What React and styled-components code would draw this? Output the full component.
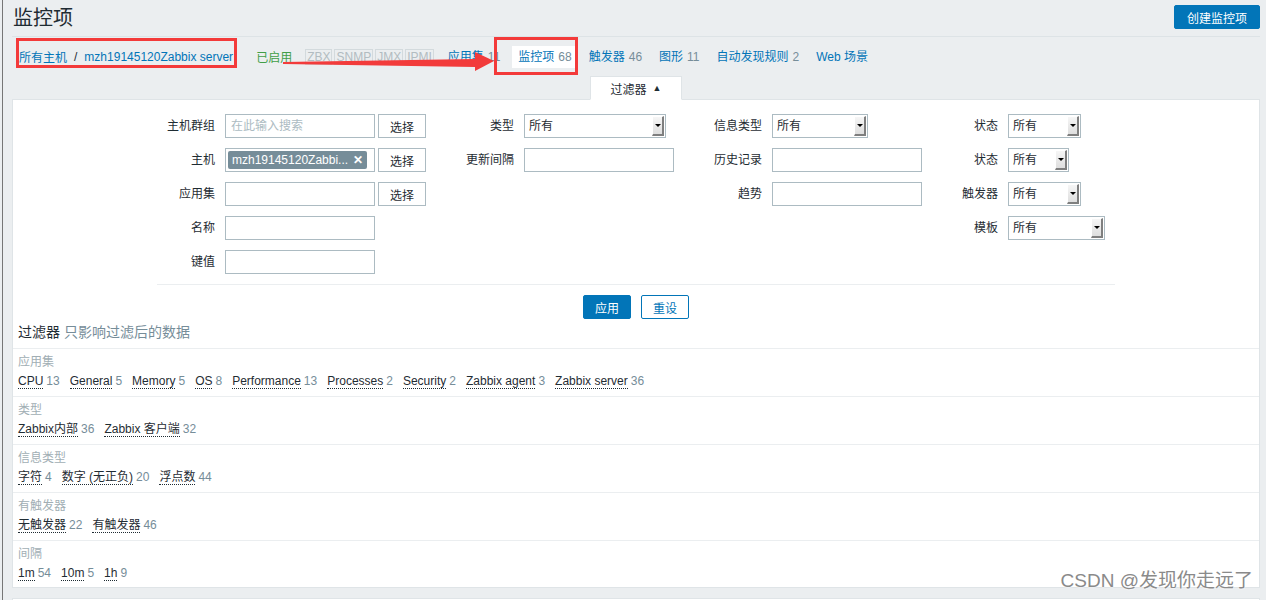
import React from 'react';
import styled, { createGlobalStyle } from 'styled-components';

const GlobalStyle = createGlobalStyle`
  html, body { margin: 0; padding: 0; overflow: hidden; }
  body {
    background: #ebeef0;
    font-family: "Liberation Sans", "Noto Sans CJK SC", Arial, sans-serif;
    font-size: 12px;
    color: #1f2c33;
  }
`;

// data for the summary block under the filter
const sections = [
  { title: '应用集', items: [['CPU', 13], ['General', 5], ['Memory', 5], ['OS', 8], ['Performance', 13], ['Processes', 2], ['Security', 2], ['Zabbix agent', 3], ['Zabbix server', 36]] },
  { title: '类型', items: [['Zabbix内部', 36], ['Zabbix 客户端', 32]] },
  { title: '信息类型', items: [['字符', 4], ['数字 (无正负)', 20], ['浮点数', 44]] },
  { title: '有触发器', items: [['无触发器', 22], ['有触发器', 46]] },
  { title: '间隔', items: [['1m', 54], ['10m', 5], ['1h', 9]] },
];

const navLinks = [
  ['应用集', 11],
  ['监控项', 68, true],
  ['触发器', 46],
  ['图形', 11],
  ['自动发现规则', 2],
  ['Web 场景'],
];

const Root = styled.div`
  position: relative;
  height: 600px;
`;

const Page = styled.div`
  margin-left: 2px;
  border-left: 1px solid #767676;
  padding: 0 6px 0 9px;
  height: 600px;
  box-sizing: border-box;
`;

const Header = styled.div`
  height: 36px;
  display: flex;
  align-items: center;
  justify-content: space-between;
  border-bottom: 1px solid #dde3e6;
`;

const Title = styled.h1`
  margin: 0 0 0 1px;
  font-size: 20px;
  font-weight: normal;
  color: #1f2c33;
  line-height: 24px;
`;

const PrimaryButton = styled.button`
  height: 24px;
  padding: 0 12px;
  border: 1px solid #0275b8;
  border-radius: 2px;
  background: #0275b8;
  color: #fff;
  font: inherit;
  margin-top: ${p => (p.$width ? 0 : -2)}px;
  ${p => p.$width && `width: ${p.$width}px; padding: 0;`}
`;

const Nav = styled.div`
  height: 39px;
  display: flex;
  align-items: center;
  gap: 18px;
  padding-left: 7px;
`;

const Crumbs = styled.div`
  display: flex;
  align-items: center;
`;

const Link = styled.span`
  color: #0275b8;
`;

const Slash = styled.span`
  margin: 0 7px;
  color: #1f2c33;
`;

const Enabled = styled.span`
  color: #429e47;
  margin-left: 5px;
`;

const BadgeGroup = styled.div`
  display: flex;
  gap: 2px;
  margin: 0 -4px 0 -5px;
`;

const Badge = styled.span`
  border: 1px solid #d3dadd;
  padding: 0 1px;
  line-height: 14px;
  color: #b2bcc1;
`;

const NavItem = styled.span`
  color: #0275b8;
  line-height: 14px;
  margin-left: ${p => p.$shift || 0}px;
  ${p => p.$active && `
    background: #fff;
    padding: 4px 6px;
    margin: 0 -6px;
  `}
`;

const Count = styled.span`
  color: #768d99;
  margin-left: ${p => p.$gap ?? 4}px;
`;

const TabRow = styled.div`
  display: flex;
  justify-content: center;
  margin-bottom: -1px;
  position: relative;
  z-index: 1;
`;

const FilterTab = styled.div`
  width: 92px;
  height: 24px;
  box-sizing: border-box;
  background: #fff;
  border: 1px solid #dfe4e7;
  border-bottom-color: #fff;
  display: flex;
  align-items: center;
  justify-content: center;
  gap: 6px;
  font-size: 12px;
`;

const Caret = styled.span`
  font-size: 9px;
`;

const Panel = styled.div`
  background: #fff;
  border: 1px solid #dfe4e7;
  margin-bottom: 10px;
  ${p => p.$stub && 'height: 40px;'}
`;

const FilterForm = styled.div`
  width: 958px;
  margin: 0 auto;
  padding-top: 14px;
  display: flex;
  gap: 10px;
`;

const FormColumn = styled.div`
  display: grid;
  grid-template-columns: ${p => p.$label}px ${p => p.$field}px;
  column-gap: 10px;
  row-gap: 10px;
  align-content: start;
`;

const Label = styled.label`
  text-align: right;
  line-height: 24px;
  white-space: nowrap;
`;

const Field = styled.div`
  display: flex;
  gap: 3px;
`;

const TextInput = styled.input`
  width: ${p => p.$w || 150}px;
  height: 24px;
  box-sizing: border-box;
  border: 1px solid #acbbc2;
  padding: 0 5px;
  font: inherit;
  color: #1f2c33;
  &::placeholder { color: #acbbc2; }
`;

const MultiSelect = styled.div`
  width: 150px;
  height: 24px;
  box-sizing: border-box;
  border: 1px solid #acbbc2;
  padding: 2px;
`;

const Chip = styled.span`
  display: inline-flex;
  align-items: center;
  gap: 5px;
  height: 18px;
  padding: 0 4px;
  border-radius: 2px;
  background: #768d99;
  color: #fff;
`;

const ChipX = styled.span`
  font-weight: bold;
  font-size: 12px;
`;

const SelectButton = styled.button`
  width: 48px;
  height: 24px;
  border: 1px solid #acbbc2;
  background: #fff;
  color: #1f2c33;
  font: inherit;
  padding: 0;
`;

const Select = styled.div`
  width: ${p => p.$w}px;
  height: 24px;
  box-sizing: border-box;
  border: 1px solid #acbbc2;
  display: flex;
  align-items: stretch;
  padding: 1px;
`;

const SelectText = styled.span`
  flex: 1;
  line-height: 20px;
  padding-left: 3px;
`;

const SelectArrow = styled.span`
  width: 12px;
  box-sizing: border-box;
  background: linear-gradient(#f6f6f6, #dedede);
  border-left: 1px solid #fff;
  border-top: 1px solid #fff;
  border-right: 2px solid #7f7f7f;
  border-bottom: 2px solid #7f7f7f;
  display: flex;
  align-items: center;
  justify-content: center;
  &::after {
    content: '';
    border-left: 3px solid transparent;
    border-right: 3px solid transparent;
    border-top: 3px solid #000;
  }
`;

const FormDivider = styled.div`
  width: 958px;
  margin: 10px auto 0;
  border-top: 1px solid #ebeef0;
`;

const ButtonRow = styled.div`
  display: flex;
  justify-content: center;
  gap: 10px;
  margin-top: 10px;
`;

const OutlineButton = styled.button`
  width: 48px;
  height: 24px;
  padding: 0;
  border: 1px solid #0275b8;
  border-radius: 2px;
  background: #fff;
  color: #0275b8;
  font: inherit;
`;

const SummaryTitle = styled.div`
  font-size: 14px;
  line-height: 16px;
  padding: 5px 5px 8px;
`;

const Hint = styled.span`
  color: #768d99;
`;

const Section = styled.div`
  border-top: 1px solid #ebeef0;
  padding: 6px 5px 7px;
  &:last-child { padding-bottom: 6px; }
`;

const SectionTitle = styled.div`
  color: #a1aeb4;
  line-height: 14px;
`;

const Tags = styled.div`
  margin-top: 4px;
  display: flex;
  gap: 10px;
  line-height: 16px;
`;

const Tag = styled.span`
  white-space: nowrap;
`;

const TagName = styled.span`
  border-bottom: 1px dotted #1f2c33;
`;

const RedBox = styled.div`
  position: absolute;
  left: ${p => p.$x}px;
  top: ${p => p.$y}px;
  width: ${p => p.$w}px;
  height: ${p => p.$h}px;
  box-sizing: border-box;
  border: 3px solid #f33a3a;
  pointer-events: none;
`;

const ArrowSvg = styled.svg`
  position: absolute;
  left: 0;
  top: 0;
  pointer-events: none;
`;

const Watermark = styled.div`
  position: absolute;
  right: 13px;
  bottom: 8px;
  font-size: 19px;
  color: #8a8a8a;
  text-shadow: 0 0 2px #fff, 0 0 2px #fff;
  font-family: "Liberation Sans", "Noto Sans CJK SC", sans-serif;
`;

const Dropdown = ({ w }) => (
  <Select $w={w}>
    <SelectText>所有</SelectText>
    <SelectArrow />
  </Select>
);

export default function App() {
  return (
    <Root>
      <GlobalStyle />
      <Page>
        <Header>
          <Title>监控项</Title>
          <PrimaryButton>创建监控项</PrimaryButton>
        </Header>

        <Nav>
          <Crumbs>
            <Link>所有主机</Link>
            <Slash>/</Slash>
            <Link>mzh19145120Zabbix server</Link>
          </Crumbs>
          <Enabled>已启用</Enabled>
          <BadgeGroup>
            {['ZBX', 'SNMP', 'JMX', 'IPMI'].map(b => <Badge key={b}>{b}</Badge>)}
          </BadgeGroup>
          {navLinks.map(([name, count, active], i) => (
            <NavItem key={name} $active={active} $shift={i > 1 ? -1 : 0}>
              {name}
              {count !== undefined && <Count>{count}</Count>}
            </NavItem>
          ))}
        </Nav>

        <TabRow>
          <FilterTab>过滤器 <Caret>▲</Caret></FilterTab>
        </TabRow>

        <Panel>
          <FilterForm>
            <FormColumn $label={58} $field={201}>
              <Label>主机群组</Label>
              <Field>
                <TextInput placeholder="在此输入搜索" />
                <SelectButton>选择</SelectButton>
              </Field>
              <Label>主机</Label>
              <Field>
                <MultiSelect>
                  <Chip>mzh19145120Zabbi... <ChipX>✕</ChipX></Chip>
                </MultiSelect>
                <SelectButton>选择</SelectButton>
              </Field>
              <Label>应用集</Label>
              <Field>
                <TextInput />
                <SelectButton>选择</SelectButton>
              </Field>
              <Label>名称</Label>
              <Field><TextInput /></Field>
              <Label>键值</Label>
              <Field><TextInput /></Field>
            </FormColumn>

            <FormColumn $label={78} $field={150}>
              <Label>类型</Label>
              <Field><Dropdown w={142} /></Field>
              <Label>更新间隔</Label>
              <Field><TextInput /></Field>
            </FormColumn>

            <FormColumn $label={78} $field={150}>
              <Label>信息类型</Label>
              <Field><Dropdown w={96} /></Field>
              <Label>历史记录</Label>
              <Field><TextInput /></Field>
              <Label>趋势</Label>
              <Field><TextInput /></Field>
            </FormColumn>

            <FormColumn $label={66} $field={107}>
              <Label>状态</Label>
              <Field><Dropdown w={73} /></Field>
              <Label>状态</Label>
              <Field><Dropdown w={61} /></Field>
              <Label>触发器</Label>
              <Field><Dropdown w={73} /></Field>
              <Label>模板</Label>
              <Field><Dropdown w={97} /></Field>
            </FormColumn>
          </FilterForm>

          <FormDivider />
          <ButtonRow>
            <PrimaryButton $width={48}>应用</PrimaryButton>
            <OutlineButton>重设</OutlineButton>
          </ButtonRow>

          <SummaryTitle>过滤器 <Hint>只影响过滤后的数据</Hint></SummaryTitle>
          {sections.map(s => (
            <Section key={s.title}>
              <SectionTitle>{s.title}</SectionTitle>
              <Tags>
                {s.items.map(([name, n]) => (
                  <Tag key={name}>
                    <TagName>{name}</TagName>
                    <Count $gap={3}>{n}</Count>
                  </Tag>
                ))}
              </Tags>
            </Section>
          ))}
        </Panel>
        <Panel $stub />
      </Page>

      {/* screenshot annotations */}
      <RedBox $x={16} $y={38} $w={221} $h={30} />
      <RedBox $x={494} $y={37} $w={84} $h={38} />
      <ArrowSvg width="520" height="90">
        <polygon
          points="283,62 475,59 475,52 494,61 475,71 475,67 283,64"
          fill="#f23b3b"
        />
      </ArrowSvg>
      <Watermark>CSDN @发现你走远了</Watermark>
    </Root>
  );
}
